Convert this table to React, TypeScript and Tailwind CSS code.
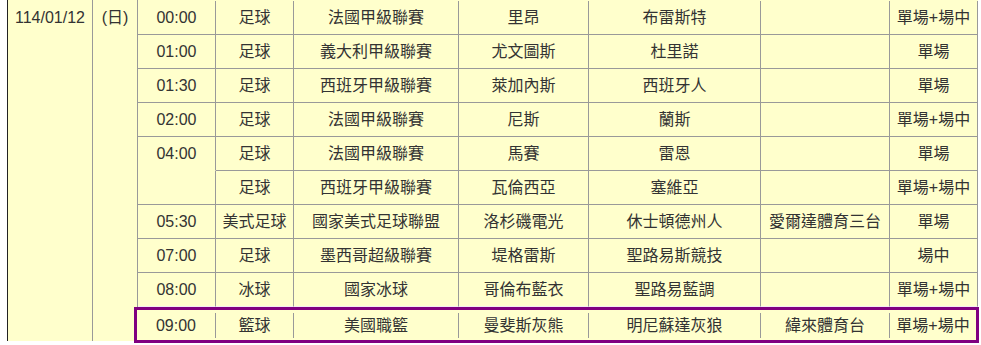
import React from 'react';

type Game = {
  time:   string;
  sport:  string;
  league: string;
  home:   string;
  away:   string;
  tv:     string;
  kind:   string;
  span?:  boolean; // time cell continues into the next row
};

const games: Game[] = [
  { time: '00:00', sport: '足球', league: '法國甲級聯賽', home: '里昂', away: '布雷斯特', tv: '', kind: '單場+場中' },
  { time: '01:00', sport: '足球', league: '義大利甲級聯賽', home: '尤文圖斯', away: '杜里諾', tv: '', kind: '單場' },
  { time: '01:30', sport: '足球', league: '西班牙甲級聯賽', home: '萊加內斯', away: '西班牙人', tv: '', kind: '單場' },
  { time: '02:00', sport: '足球', league: '法國甲級聯賽', home: '尼斯', away: '蘭斯', tv: '', kind: '單場+場中' },
  { time: '04:00', sport: '足球', league: '法國甲級聯賽', home: '馬賽', away: '雷恩', tv: '', kind: '單場', span: true },
  { time: '', sport: '足球', league: '西班牙甲級聯賽', home: '瓦倫西亞', away: '塞維亞', tv: '', kind: '單場+場中' },
  { time: '05:30', sport: '美式足球', league: '國家美式足球聯盟', home: '洛杉磯電光', away: '休士頓德州人', tv: '愛爾達體育三台', kind: '單場' },
  { time: '07:00', sport: '足球', league: '墨西哥超級聯賽', home: '堤格雷斯', away: '聖路易斯競技', tv: '', kind: '場中' },
  { time: '08:00', sport: '冰球', league: '國家冰球', home: '哥倫布藍衣', away: '聖路易藍調', tv: '', kind: '單場+場中' },
];

const highlight: Game = {
  time: '09:00', sport: '籃球', league: '美國職籃', home: '曼斐斯灰熊', away: '明尼蘇達灰狼', tv: '緯來體育台', kind: '單場+場中',
};

const widths = ['w-[78px]', 'w-[78px]', 'w-[165px]', 'w-[130px]', 'w-[172px]', 'w-[129px]', 'w-[88px]'];

const cellsOf = (g: Game) => [g.time, g.sport, g.league, g.home, g.away, g.tv, g.kind];

export default function App() {
  return (
    <div
      className="min-h-screen bg-white text-[16px] text-[#333]"
      style={{ fontFamily: '"Liberation Sans", Arial, "Noto Sans CJK TC", sans-serif' }}
    >
      <div className="ml-[7px] flex w-[971px]">
        {/* Date */}
        <div className="mb-[2px] w-[86px] border-l border-r border-l-[#222] border-r-[#999] bg-[#ffffcc] pt-px text-center leading-[33px]">
          114/01/12
        </div>
        {/* Weekday */}
        <div className="mb-[2px] w-[44px] bg-[#ffffcc] pt-px text-center leading-[33px]">(日)</div>

        {/* Games */}
        <div className="flex w-[841px] flex-col">
          <div className="border-l border-[#999] bg-[#ffffcc] pt-px">
            {games.map((g, i) => {
              const last = i === games.length - 1;
              return (
                <div key={i} className="flex">
                  {cellsOf(g).map((c, j) => (
                    <div
                      key={j}
                      className={
                        `${widths[j]} flex h-[34px] items-center justify-center whitespace-nowrap border-r border-b border-r-[#999] ` +
                        (last ? 'border-b-[#f3ecf3]' : j === 0 && g.span ? 'border-b-[#ffffcc]' : 'border-b-[#999]')
                      }
                    >
                      {c}
                    </div>
                  ))}
                </div>
              );
            })}
          </div>

          {/* Highlighted game */}
          <div className="-ml-[3px] flex h-[36px] w-[845px] border-[3px] border-[#800080] bg-[#ffffcc] pt-[3px]">
            {cellsOf(highlight).map((c, j) => (
              <div
                key={j}
                className={
                  `flex h-[25px] items-center justify-center whitespace-nowrap ` +
                  (j === 0 ? 'w-[79px] border-r border-[#999]' : j < 6 ? `${widths[j]} border-r border-[#999]` : 'flex-1')
                }
              >
                {c}
              </div>
            ))}
          </div>
        </div>
      </div>
    </div>
  );
}
